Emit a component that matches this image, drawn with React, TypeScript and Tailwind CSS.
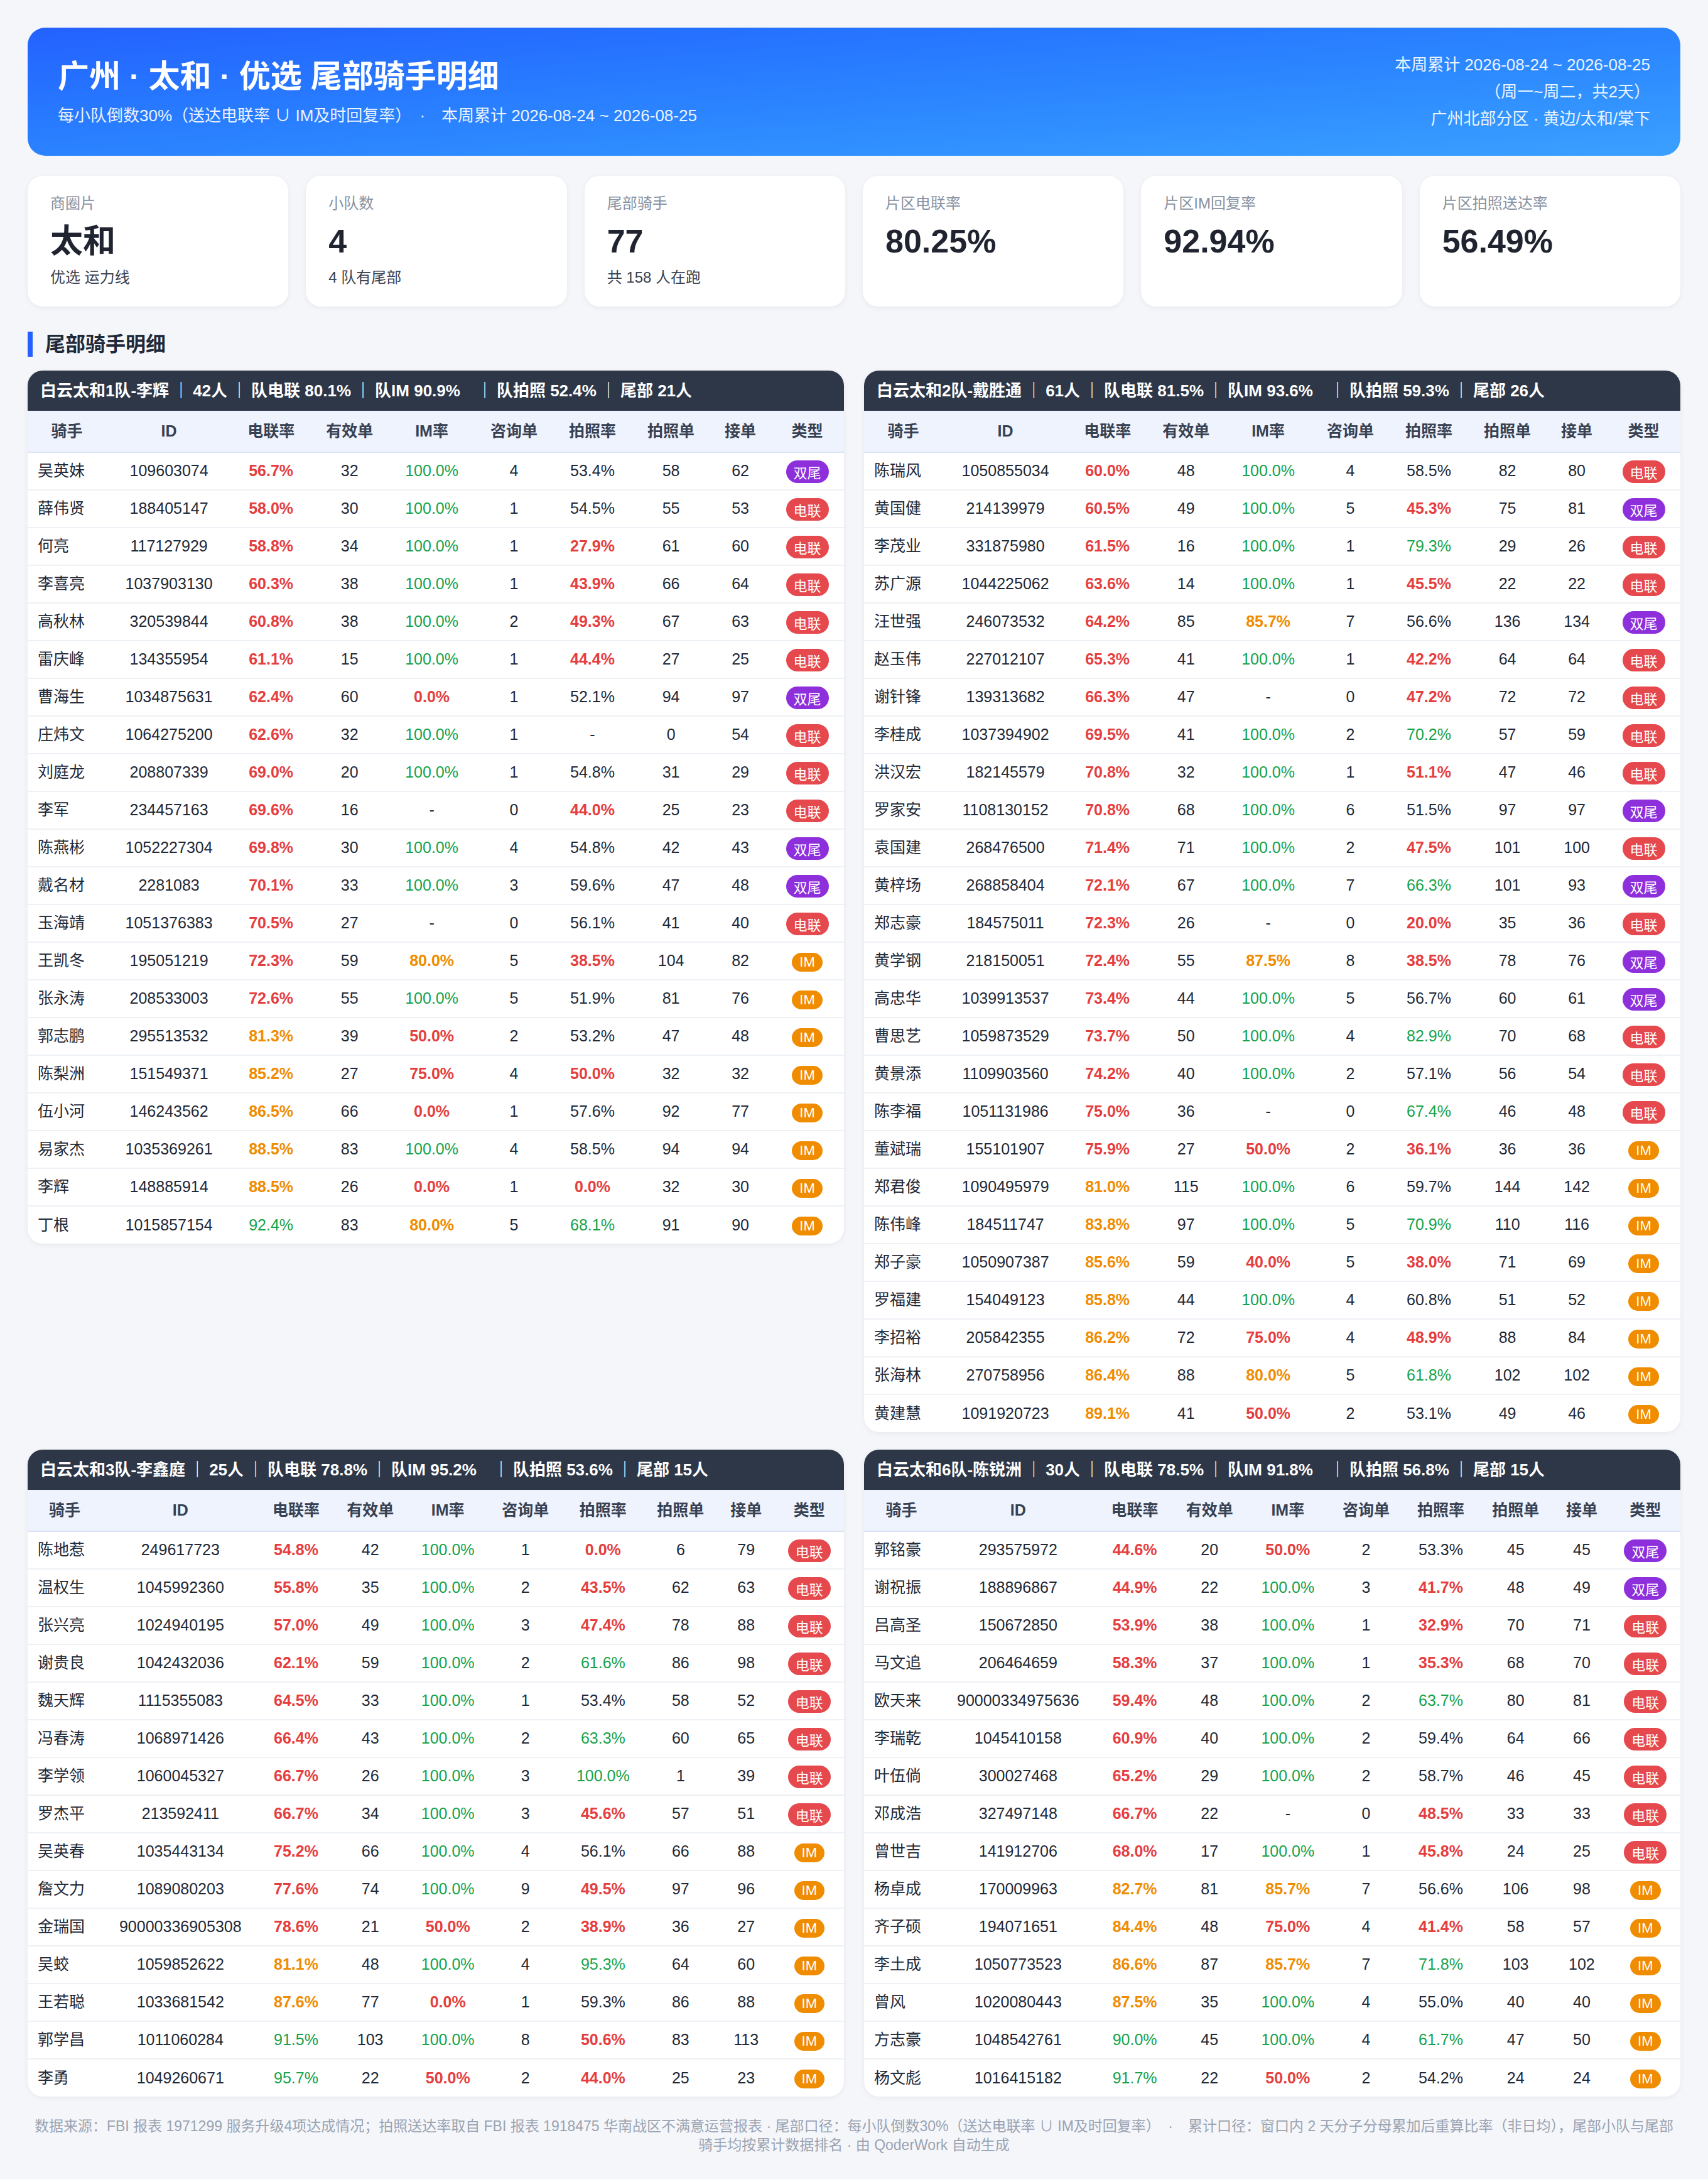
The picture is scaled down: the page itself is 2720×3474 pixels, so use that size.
import React from "react";

const team1 = [
  "吴英妹 109603074 56.7% 32 100.0% 4 53.4% 58 62 双尾",
  "薛伟贤 188405147 58.0% 30 100.0% 1 54.5% 55 53 电联",
  "何亮 117127929 58.8% 34 100.0% 1 27.9% 61 60 电联",
  "李喜亮 1037903130 60.3% 38 100.0% 1 43.9% 66 64 电联",
  "高秋林 320539844 60.8% 38 100.0% 2 49.3% 67 63 电联",
  "雷庆峰 134355954 61.1% 15 100.0% 1 44.4% 27 25 电联",
  "曹海生 1034875631 62.4% 60 0.0% 1 52.1% 94 97 双尾",
  "庄炜文 1064275200 62.6% 32 100.0% 1 - 0 54 电联",
  "刘庭龙 208807339 69.0% 20 100.0% 1 54.8% 31 29 电联",
  "李军 234457163 69.6% 16 - 0 44.0% 25 23 电联",
  "陈燕彬 1052227304 69.8% 30 100.0% 4 54.8% 42 43 双尾",
  "戴名材 2281083 70.1% 33 100.0% 3 59.6% 47 48 双尾",
  "玉海靖 1051376383 70.5% 27 - 0 56.1% 41 40 电联",
  "王凯冬 195051219 72.3% 59 80.0% 5 38.5% 104 82 IM",
  "张永涛 208533003 72.6% 55 100.0% 5 51.9% 81 76 IM",
  "郭志鹏 295513532 81.3% 39 50.0% 2 53.2% 47 48 IM",
  "陈梨洲 151549371 85.2% 27 75.0% 4 50.0% 32 32 IM",
  "伍小河 146243562 86.5% 66 0.0% 1 57.6% 92 77 IM",
  "易家杰 1035369261 88.5% 83 100.0% 4 58.5% 94 94 IM",
  "李辉 148885914 88.5% 26 0.0% 1 0.0% 32 30 IM",
  "丁根 1015857154 92.4% 83 80.0% 5 68.1% 91 90 IM",
];

const team2 = [
  "陈瑞风 1050855034 60.0% 48 100.0% 4 58.5% 82 80 电联",
  "黄国健 214139979 60.5% 49 100.0% 5 45.3% 75 81 双尾",
  "李茂业 331875980 61.5% 16 100.0% 1 79.3% 29 26 电联",
  "苏广源 1044225062 63.6% 14 100.0% 1 45.5% 22 22 电联",
  "汪世强 246073532 64.2% 85 85.7% 7 56.6% 136 134 双尾",
  "赵玉伟 227012107 65.3% 41 100.0% 1 42.2% 64 64 电联",
  "谢针锋 139313682 66.3% 47 - 0 47.2% 72 72 电联",
  "李桂成 1037394902 69.5% 41 100.0% 2 70.2% 57 59 电联",
  "洪汉宏 182145579 70.8% 32 100.0% 1 51.1% 47 46 电联",
  "罗家安 1108130152 70.8% 68 100.0% 6 51.5% 97 97 双尾",
  "袁国建 268476500 71.4% 71 100.0% 2 47.5% 101 100 电联",
  "黄梓场 268858404 72.1% 67 100.0% 7 66.3% 101 93 双尾",
  "郑志豪 184575011 72.3% 26 - 0 20.0% 35 36 电联",
  "黄学钢 218150051 72.4% 55 87.5% 8 38.5% 78 76 双尾",
  "高忠华 1039913537 73.4% 44 100.0% 5 56.7% 60 61 双尾",
  "曹思艺 1059873529 73.7% 50 100.0% 4 82.9% 70 68 电联",
  "黄景添 1109903560 74.2% 40 100.0% 2 57.1% 56 54 电联",
  "陈李福 1051131986 75.0% 36 - 0 67.4% 46 48 电联",
  "董斌瑞 155101907 75.9% 27 50.0% 2 36.1% 36 36 IM",
  "郑君俊 1090495979 81.0% 115 100.0% 6 59.7% 144 142 IM",
  "陈伟峰 184511747 83.8% 97 100.0% 5 70.9% 110 116 IM",
  "郑子豪 1050907387 85.6% 59 40.0% 5 38.0% 71 69 IM",
  "罗福建 154049123 85.8% 44 100.0% 4 60.8% 51 52 IM",
  "李招裕 205842355 86.2% 72 75.0% 4 48.9% 88 84 IM",
  "张海林 270758956 86.4% 88 80.0% 5 61.8% 102 102 IM",
  "黄建慧 1091920723 89.1% 41 50.0% 2 53.1% 49 46 IM",
];

const team3 = [
  "陈地惹 249617723 54.8% 42 100.0% 1 0.0% 6 79 电联",
  "温权生 1045992360 55.8% 35 100.0% 2 43.5% 62 63 电联",
  "张兴亮 1024940195 57.0% 49 100.0% 3 47.4% 78 88 电联",
  "谢贵良 1042432036 62.1% 59 100.0% 2 61.6% 86 98 电联",
  "魏天辉 1115355083 64.5% 33 100.0% 1 53.4% 58 52 电联",
  "冯春涛 1068971426 66.4% 43 100.0% 2 63.3% 60 65 电联",
  "李学领 1060045327 66.7% 26 100.0% 3 100.0% 1 39 电联",
  "罗杰平 213592411 66.7% 34 100.0% 3 45.6% 57 51 电联",
  "吴英春 1035443134 75.2% 66 100.0% 4 56.1% 66 88 IM",
  "詹文力 1089080203 77.6% 74 100.0% 9 49.5% 97 96 IM",
  "金瑞国 90000336905308 78.6% 21 50.0% 2 38.9% 36 27 IM",
  "吴蛟 1059852622 81.1% 48 100.0% 4 95.3% 64 60 IM",
  "王若聪 1033681542 87.6% 77 0.0% 1 59.3% 86 88 IM",
  "郭学昌 1011060284 91.5% 103 100.0% 8 50.6% 83 113 IM",
  "李勇 1049260671 95.7% 22 50.0% 2 44.0% 25 23 IM",
];

const team6 = [
  "郭铭豪 293575972 44.6% 20 50.0% 2 53.3% 45 45 双尾",
  "谢祝振 188896867 44.9% 22 100.0% 3 41.7% 48 49 双尾",
  "吕高圣 150672850 53.9% 38 100.0% 1 32.9% 70 71 电联",
  "马文追 206464659 58.3% 37 100.0% 1 35.3% 68 70 电联",
  "欧天来 90000334975636 59.4% 48 100.0% 2 63.7% 80 81 电联",
  "李瑞乾 1045410158 60.9% 40 100.0% 2 59.4% 64 66 电联",
  "叶伍倘 300027468 65.2% 29 100.0% 2 58.7% 46 45 电联",
  "邓成浩 327497148 66.7% 22 - 0 48.5% 33 33 电联",
  "曾世吉 141912706 68.0% 17 100.0% 1 45.8% 24 25 电联",
  "杨卓成 170009963 82.7% 81 85.7% 7 56.6% 106 98 IM",
  "齐子硕 194071651 84.4% 48 75.0% 4 41.4% 58 57 IM",
  "李土成 1050773523 86.6% 87 85.7% 7 71.8% 103 102 IM",
  "曾风 1020080443 87.5% 35 100.0% 4 55.0% 40 40 IM",
  "方志豪 1048542761 90.0% 45 100.0% 4 61.7% 47 50 IM",
  "杨文彪 1016415182 91.7% 22 50.0% 2 54.2% 24 24 IM",
];

const teams = [
  { name: "白云太和1队-李辉", size: "42人", dl: "80.1%", im: "90.9%", pz: "52.4%", tail: "21人", rows: team1 },
  { name: "白云太和2队-戴胜通", size: "61人", dl: "81.5%", im: "93.6%", pz: "59.3%", tail: "26人", rows: team2 },
  { name: "白云太和3队-李鑫庭", size: "25人", dl: "78.8%", im: "95.2%", pz: "53.6%", tail: "15人", rows: team3 },
  { name: "白云太和6队-陈锐洲", size: "30人", dl: "78.5%", im: "91.8%", pz: "56.8%", tail: "15人", rows: team6 },
];

const stats = [
  { label: "商圈片", value: "太和", sub: "优选 运力线" },
  { label: "小队数", value: "4", sub: "4 队有尾部" },
  { label: "尾部骑手", value: "77", sub: "共 158 人在跑" },
  { label: "片区电联率", value: "80.25%", sub: "" },
  { label: "片区IM回复率", value: "92.94%", sub: "" },
  { label: "片区拍照送达率", value: "56.49%", sub: "" },
];

const RED = "text-[#e53e3e] font-bold";
const ORANGE = "text-[#f08c00] font-bold";
const GREEN = "text-[#16a34a]";

// 电联率 / IM率 use the same bands
function rateTone(v: string) {
  if (v === "-") return "";
  const n = parseFloat(v);
  if (n < 80) return RED;
  if (n < 90) return ORANGE;
  return GREEN;
}

function photoTone(v: string) {
  if (v === "-") return "";
  const n = parseFloat(v);
  if (n < 51.3) return RED;
  if (n >= 61) return GREEN;
  return "";
}

const badgeTone: Record<string, string> = {
  双尾: "bg-[#8e2fdc]",
  电联: "bg-[#e5484d]",
  IM: "bg-[#f08c00]",
};

const heads = ["骑手", "ID", "电联率", "有效单", "IM率", "咨询单", "拍照率", "拍照单", "接单", "类型"];

function Sep() {
  return <span className="mx-[3px]">｜</span>;
}

function TeamTable({ team }: { team: (typeof teams)[number] }) {
  return (
    <div className="bg-white rounded-xl overflow-hidden shadow-[0_1px_4px_rgba(15,23,42,0.06)]">
      <div className="h-8 bg-[#2d3748] px-[10px] flex items-center text-white text-[13px] font-bold whitespace-nowrap">
        <span>{team.name}</span>
        <Sep />
        <span>{team.size}</span>
        <Sep />
        <span>队电联 {team.dl}</span>
        <Sep />
        <span>队IM {team.im}</span>
        <span className="ml-[10px]" />
        <Sep />
        <span>队拍照 {team.pz}</span>
        <Sep />
        <span>尾部 {team.tail}</span>
      </div>
      <table className="w-full border-collapse">
        <thead>
          <tr className="bg-[#eef3fe] border-b border-[#dbe4f4]">
            {heads.map((h) => (
              <th key={h} className="h-[33px] px-2 text-center text-[12.5px] font-bold text-[#374151] whitespace-nowrap">
                {h}
              </th>
            ))}
          </tr>
        </thead>
        <tbody>
          {team.rows.map((line) => {
            const [name, id, dl, valid, im, ask, pz, pzn, take, kind] = line.split(" ");
            return (
              <tr key={name + id} className="border-b border-[#eef1f5] last:border-b-0 text-[12.5px] text-[#1f2937]">
                <td className="h-[30px] px-2 text-left whitespace-nowrap">{name}</td>
                <td className="px-2 text-center">{id}</td>
                <td className={`px-2 text-center ${rateTone(dl)}`}>{dl}</td>
                <td className="px-2 text-center">{valid}</td>
                <td className={`px-2 text-center ${rateTone(im)}`}>{im}</td>
                <td className="px-2 text-center">{ask}</td>
                <td className={`px-2 text-center ${photoTone(pz)}`}>{pz}</td>
                <td className="px-2 text-center">{pzn}</td>
                <td className="px-2 text-center">{take}</td>
                <td className="px-2 text-center">
                  <span className={`inline-block rounded-full px-[6px] py-[1px] text-[11px] leading-[normal] text-white whitespace-nowrap align-middle ${badgeTone[kind]}`}>
                    {kind}
                  </span>
                </td>
              </tr>
            );
          })}
        </tbody>
      </table>
    </div>
  );
}

export default function App() {
  return (
    <div className="[zoom:2] bg-[#f4f6fa] font-['Liberation_Sans','Noto_Sans_CJK_SC',sans-serif] text-[#1f2937]">
      <div className="px-[22px] pt-[22px] pb-[20px]">
        {/* Banner */}
        <header className="h-[102px] rounded-[14px] bg-linear-to-br from-[#2461ff] to-[#3aa0ff] px-6 flex items-center justify-between text-white">
          <div>
            <h1 className="text-[25px] leading-[32px] font-bold">广州 · 太和 · 优选 尾部骑手明细</h1>
            <p className="mt-[6px] text-[13px] leading-[18px] text-white/90">
              每小队倒数30%（送达电联率 ∪ IM及时回复率）
              <span className="mx-[13px]">·</span>
              本周累计 2026-08-24 ~ 2026-08-25
            </p>
          </div>
          <div className="text-right text-[13px] leading-[21.5px] text-white/90">
            <div>本周累计 2026-08-24 ~ 2026-08-25</div>
            <div>（周一~周二，共2天）</div>
            <div>广州北部分区 · 黄边/太和/棠下</div>
          </div>
        </header>

        {/* Stat cards */}
        <div className="mt-4 grid grid-cols-6 gap-[14px]">
          {stats.map((s) => (
            <div key={s.label} className="h-[104px] rounded-xl bg-white px-[18px] pt-[14px] shadow-[0_1px_4px_rgba(15,23,42,0.06)]">
              <div className="text-[12px] leading-4 text-[#8792a2]">{s.label}</div>
              <div className="mt-[6px] text-[26px] leading-[32px] font-bold text-[#1f2430]">{s.value}</div>
              {s.sub && <div className="mt-[5px] text-[12px] leading-4 text-[#3a4150]">{s.sub}</div>}
            </div>
          ))}
        </div>

        {/* Section title */}
        <div className="mt-[19px] flex items-center gap-[10px]">
          <span className="w-1 h-[20px] bg-[#2461ff]" />
          <h2 className="text-[16px] leading-[22px] font-bold text-[#1f2937]">尾部骑手明细</h2>
        </div>

        <div className="mt-[10px] grid grid-cols-2 gap-x-4 gap-y-[14px] items-start">
          {teams.map((t) => (
            <TeamTable key={t.name} team={t} />
          ))}
        </div>

        <p className="mt-[16px] text-center text-[11.5px] leading-[15px] text-[#9aa3b2]">
          数据来源：FBI 报表 1971299 服务升级4项达成情况；拍照送达率取自 FBI 报表 1918475 华南战区不满意运营报表 · 尾部口径：每小队倒数30%（送达电联率 ∪ IM及时回复率）
          <span className="mx-[12px]">·</span>
          累计口径：窗口内 2 天分子分母累加后重算比率（非日均），尾部小队与尾部骑手均按累计数据排名 · 由 QoderWork 自动生成
        </p>
      </div>
    </div>
  );
}
